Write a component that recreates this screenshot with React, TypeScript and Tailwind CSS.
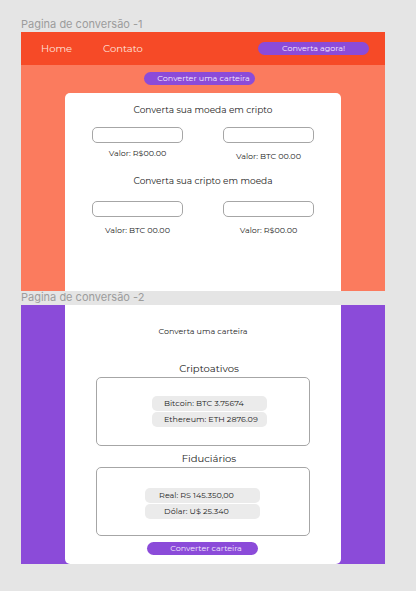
import type { ReactNode } from "react";

const pill =
  "flex h-[13px] items-center justify-center rounded-full bg-[#8b4bd9] text-[8px] leading-[13px] whitespace-nowrap text-[#f4ebfc]";

function Field({ id, label, low = false }: { id: string; label: string; low?: boolean }) {
  return (
    <div className="flex flex-col items-center">
      <input
        id={id}
        type="text"
        className="h-4 w-full rounded-[5px] border border-[#a6a6a6] bg-white px-1 text-[8px] outline-none"
      />
      <label
        htmlFor={id}
        className={`text-[8px] leading-4 whitespace-nowrap ${low ? "mt-[5px]" : "mt-[2px]"}`}
      >
        {label}
      </label>
    </div>
  );
}

function Balance({ children }: { children: ReactNode }) {
  return (
    <li className="h-[15px] w-[115px] rounded-[5px] bg-[#ebebeb] text-[8px] leading-[15px] whitespace-nowrap">
      {children}
    </li>
  );
}

export default function App() {
  return (
    <main className="min-h-screen bg-[#e5e5e5] pt-4 pr-[31px] pb-[27px] pl-[21px] font-['Montserrat','Inter',sans-serif] text-[#1c1c1c]">
      <h2 className="font-['Inter',sans-serif] text-[11px] leading-4 text-[#9c9c9c]">
        Pagina de conversão -1
      </h2>
      <section className="bg-[#fb7b5e]">
        <header className="flex h-[33px] items-center justify-between bg-[#f64a27] pr-4 pl-5">
          <nav className="flex gap-[31px] text-[10px] leading-4 text-[#ffe3dc]">
            <a href="#home">Home</a>
            <a href="#contato">Contato</a>
          </nav>
          <button type="button" className={`${pill} w-[111px]`}>
            Converta agora!
          </button>
        </header>
        <div className="flex justify-center pt-[7px] pr-[7px] pb-2">
          <button type="button" className={`${pill} w-[111px] pl-2`}>
            Converter uma carteira
          </button>
        </div>
        <div className="mx-11 rounded-t-[5px] bg-white px-[27px] pt-[9px] pb-[53px]">
          <h3 className="text-center text-[9px] leading-4">Converta sua moeda em cripto</h3>
          <div className="mt-[9px] grid grid-cols-2 gap-x-10">
            <Field id="real-origem" label="Valor: R$00.00" />
            <Field id="btc-destino" label="Valor: BTC 00.00" low />
          </div>
          <h3 className="mt-[9px] text-center text-[9px] leading-4">Converta sua cripto em moeda</h3>
          <div className="mt-3 grid grid-cols-2 gap-x-10">
            <Field id="btc-origem" label="Valor: BTC 00.00" low />
            <Field id="real-destino" label="Valor: R$00.00" low />
          </div>
        </div>
      </section>

      <h2 className="pb-[2px] font-['Inter',sans-serif] text-[11px] leading-3 text-[#9c9c9c]">
        Pagina de conversão -2
      </h2>
      <section className="bg-[#8b4bd9] px-11">
        <div className="rounded-b-[5px] bg-white px-[31px] pt-[18px] pb-[9px]">
          <p className="text-center text-[8px] leading-4">Converta uma carteira</p>

          <h3 className="mt-[22px] pl-3 text-center text-[10px] leading-4">Criptoativos</h3>
          <ul className="flex flex-col gap-px rounded-[5px] border border-[#a6a6a6] pt-[18px] pb-[18px] pl-[55px]">
            <Balance>
              <span className="pl-3">Bitcoin: BTC 3.75674</span>
            </Balance>
            <Balance>
              <span className="pl-3">Ethereum: ETH 2876.09</span>
            </Balance>
          </ul>

          <h3 className="mt-[5px] pl-3 text-center text-[10px] leading-4">Fiduciários</h3>
          <ul className="flex flex-col gap-px rounded-[5px] border border-[#a6a6a6] pt-5 pb-4 pl-12">
            <Balance>
              <span className="block pr-3 text-center">Real: RS 145.350,00</span>
            </Balance>
            <Balance>
              <span className="block pr-3 text-center">Dólar: U$ 25.340</span>
            </Balance>
          </ul>

          <div className="mt-[6px] flex justify-center pr-[2px]">
            <button type="button" className={`${pill} w-[111px] pl-2`}>
              Converter carteira
            </button>
          </div>
        </div>
      </section>
    </main>
  );
}
